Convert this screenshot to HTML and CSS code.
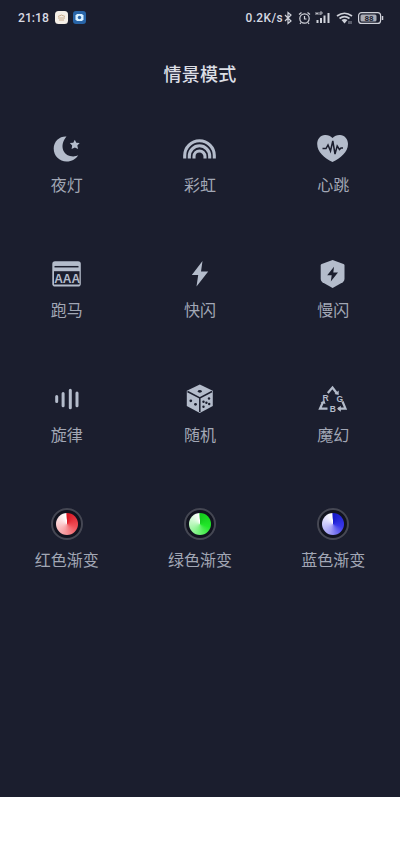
FILE: index.html
```html
<!DOCTYPE html>
<html lang="zh-CN">
<head>
<meta charset="utf-8">
<title>情景模式</title>
<link rel="stylesheet" href="styles.css">
</head>
<body>
<main class="screen">
  <header class="status">
    <span class="time">21:18</span>
    <svg class="app" viewBox="0 0 13 13"><rect width="13" height="13" rx="3.5" fill="#f5efe7"/><path d="M3 5.5Q6.500 2.500 10 5.500M3 7h7M4 9h5" fill="none" stroke="#c9ac8c"/></svg>
    <svg class="app second" viewBox="0 0 13 13"><rect width="13" height="13" rx="3" fill="#2865a8"/><path d="M4 3h5l1.500 1.500v4L9 10H4L2.500 8.500v-4z" fill="#d8f0ff"/><circle cx="6.500" cy="6.500" r="1.700" fill="#2865a8"/></svg>
    <span class="speed">0.2K/s</span>
    <svg class="indicators" viewBox="0 0 102 16" fill="none" stroke="#d0d2da" stroke-width="1.200">
      <path d="M2 5l6 6-3 2.500v-11L8 5l-6 6"/>
      <circle cx="21.500" cy="8.500" r="4.700"/><path d="M21.500 6v3h2M16 4.500l2.500-2M27 4.500l-2.500-2M18 12.500l-1 1.500M25 12.500l1 1.500"/>
      <path d="M33 2v3M35 2v3M33 3.500h2M37 5V2h2v2h-2" stroke-width=".8"/>
      <path d="M34.500 13v-3M38 13V8M41.500 13V5.500M45.500 13V3" stroke-width="2"/>
      <path d="M54 6q7.500-5.500 15 0M56.500 8.500q5-3.700 10 0" stroke-width="1.700"/><path d="M58.500 10q3-2 6 0l-3 3.500z" fill="#d0d2da" stroke="none"/><path d="M66 11v3M68 11v3" stroke-width=".7"/>
      <rect x="75.600" y="2.600" width="22" height="10.800" rx="3"/><rect x="77.500" y="4.500" width="16" height="7" rx="1.500" fill="#a9abb5" stroke="none"/><path d="M99.500 6v4" stroke-width="1.500"/>
      <text class="charge" x="86" y="11">88</text>
    </svg>
  </header>
  <h1 class="title">情景模式</h1>
  <section class="modes">
    <div class="mode">
      <svg class="icon" viewBox="0 0 36 36"><path d="M17.500 6.500C11 6 4.700 11 4.700 18.500C4.700 26 10.500 31.500 17.500 31.500C23 31.500 27 29 29.300 25C27 26.500 24 26.800 21 26C13 24 10.800 14 17.500 6.500Z"/><path d="M25.800 9.800l1.500 3 3.400.2-2.400 2.600.8 3.400-3.200-1.500-3.300 1.500.6-3.400-2.400-2.500 3.500-.4z"/></svg>
      <span class="label">夜灯</span>
    </div>
    <div class="mode">
      <svg class="icon line" viewBox="0 0 36 36" stroke-width="3.100"><path d="M2.700 28.500v-3a14.800 14.800 0 0 1 29.600 0v3M7.300 28.500v-2.500a10.200 10.200 0 0 1 20.400 0v2.500M12 28.500v-2a5.500 5.500 0 0 1 11 0v2"/></svg>
      <span class="label">彩虹</span>
    </div>
    <div class="mode">
      <svg class="icon" viewBox="0 0 36 36"><path d="M17.500 8C19.500 5.500 22 4.800 25 4.900C29.500 5 33 9 33 14C33 22 25.500 28 17.500 32C9.500 28 2.200 22 2.200 14C2.200 9 5.500 5 10 4.900C13 4.800 15.500 5.500 17.500 8Z"/><path class="cut" d="M7.500 18.500H11l2-3.500 2.500 6L17.800 11l2.200 13 2.200-8 2.300 3.500L26 18h2"/></svg>
      <span class="label">心跳</span>
    </div>
    <div class="mode">
      <svg class="icon" viewBox="0 0 36 36"><rect x="3.300" y="6.300" width="28.500" height="25.200" rx="2.800"/><path class="cut" d="M5.500 11.700h24" stroke-width="2"/><path d="M5 16.200h25.500V29.500H5z" fill="#1b1e2e"/><text class="marquee" x="18.200" y="27.800">AAA</text></svg>
      <span class="label">跑马</span>
    </div>
    <div class="mode">
      <svg class="icon" viewBox="0 0 36 36"><path d="M20.500 6L9.800 20h6.400L14.500 31.500L26.200 16.500H19z"/></svg>
      <span class="label">快闪</span>
    </div>
    <div class="mode">
      <svg class="icon" viewBox="0 0 36 36"><path d="M17.600 5L28.500 9Q29.500 9.400 29.500 10.500V24Q29.500 26 27.800 27.200L17.600 33L7.400 27.200Q5.700 26 5.700 24V10.500Q5.700 9.400 6.700 9z"/><path d="M19 11.800L12.200 20.300h4.500L15.800 26.500L23 17.500h-4.700z" fill="#1b1e2e"/></svg>
      <span class="label">慢闪</span>
    </div>
    <div class="mode">
      <svg class="icon line" viewBox="0 0 36 36" stroke-width="3" stroke-linecap="round"><path d="M7.700 16.500v5M14.100 13.500v12.200M21.300 10.200v17.500M28 13v12.800"/></svg>
      <span class="label">旋律</span>
    </div>
    <div class="mode">
      <svg class="icon" viewBox="0 0 36 36"><path d="M17.800 4.500L30.800 10.800V26L17.800 33L4.800 26V10.800z"/><path class="cut" d="M5.500 11.500L17.800 18L30 11.500M17.800 18v14" stroke-width="1"/><g fill="#1b1e2e"><ellipse cx="17.800" cy="11.300" rx="2" ry="1.400"/><circle cx="8.800" cy="20.800" r="1.400"/><circle cx="13.500" cy="24.300" r="1.400"/><circle cx="27" cy="18.500" r="1.200"/><circle cx="24.400" cy="22.700" r="1.200"/><circle cx="21.500" cy="26.800" r="1.200"/><circle cx="27.200" cy="24" r="1.200"/><circle cx="21.500" cy="21.700" r="1.200"/></g></svg>
      <span class="label">随机</span>
    </div>
    <div class="mode">
      <svg class="icon line" viewBox="0 0 36 36" stroke-width="2.200"><path d="M12.800 13L17.500 7.500L22 13.500M8 22L5 28.700H12.500M27.500 21.500L30.500 28.700H23"/><path d="M19.500 14l4.200 1V10.500zM22 28.700l3.800-3v6zM5.500 22.500l4-2 1 3.500z" fill="#b4bccb" stroke="none"/><g class="rgb"><text x="10.500" y="20.500">R</text><text x="24.800" y="21.500">G</text><text x="17.700" y="31.800">B</text></g></svg>
      <span class="label">魔幻</span>
    </div>
    <div class="mode">
      <span class="ring"><span class="disc red"></span></span>
      <span class="label">红色渐变</span>
    </div>
    <div class="mode">
      <span class="ring"><span class="disc green"></span></span>
      <span class="label">绿色渐变</span>
    </div>
    <div class="mode">
      <span class="ring"><span class="disc blue"></span></span>
      <span class="label">蓝色渐变</span>
    </div>
  </section>
</main>
</body>
</html>
```
FILE: styles.css
```css
body {
  margin: 0;
  background: #fff;
  font-family: Roboto, "Noto Sans CJK SC", sans-serif;
}

.screen {
  height: 797px;
  background: #1b1e2e;
  overflow: hidden;
}

.status {
  display: flex;
  align-items: center;
  height: 35px;
  padding: 0 15px 0 18px;
  color: #d8dae2;
  font-size: 12px;
  font-weight: 500;
}

.time {
  width: 36.5px;
  font-size: 12.2px;
}

.app {
  width: 13px;
  height: 13px;
}

.app.second {
  margin-left: 5px;
}

.speed {
  margin-left: auto;
  font-size: 11.9px;
  letter-spacing: 0.4px;
}

.indicators {
  width: 102px;
  height: 16px;
}

.charge {
  fill: #1b1e2e;
  stroke: none;
  font-size: 8px;
  font-weight: 700;
  text-anchor: middle;
}

.title {
  margin: 0;
  padding-top: 27px;
  color: #dcdee5;
  font-size: 18px;
  font-weight: 500;
  line-height: 26px;
  letter-spacing: 0.3px;
  text-align: center;
}

.modes {
  display: grid;
  grid-template-columns: repeat(3, 1fr);
  grid-auto-rows: 125px;
  padding-top: 42px;
}

.mode {
  display: flex;
  flex-direction: column;
  align-items: center;
}

.icon {
  width: 36px;
  height: 36px;
  fill: #b4bccb;
}

.icon.line {
  fill: none;
  stroke: #b4bccb;
}

.cut {
  fill: none;
  stroke: #1b1e2e;
  stroke-width: 1.5;
}

.marquee {
  font-family: "Liberation Sans", sans-serif;
  font-size: 12px;
  font-weight: 700;
  text-anchor: middle;
}

.rgb {
  fill: #b4bccb;
  stroke: none;
  font-family: "Liberation Sans", sans-serif;
  font-size: 8.5px;
  font-weight: 700;
  text-anchor: middle;
}

.label {
  margin-top: 8px;
  color: #a2a7b5;
  font-size: 16px;
  line-height: 24px;
}

.ring {
  display: flex;
  align-items: center;
  justify-content: center;
  box-sizing: border-box;
  width: 32px;
  height: 32px;
  margin: 3px 0 1px;
  border: 2px solid #454753;
  border-radius: 50%;
  background: #11131f;
}

.disc {
  width: 22px;
  height: 22px;
  border-radius: 50%;
}

.red {
  background: conic-gradient(#d81420, #f05058 30%, #f7a0a4 55%, #fff 98%, #d81420);
}

.green {
  background: conic-gradient(#14c81c, #22e82a 30%, #7df282 55%, #fff 98%, #14c81c);
}

.blue {
  background: conic-gradient(#1418c8, #3a38ea 30%, #a09cf5 55%, #fff 98%, #1418c8);
}
```
